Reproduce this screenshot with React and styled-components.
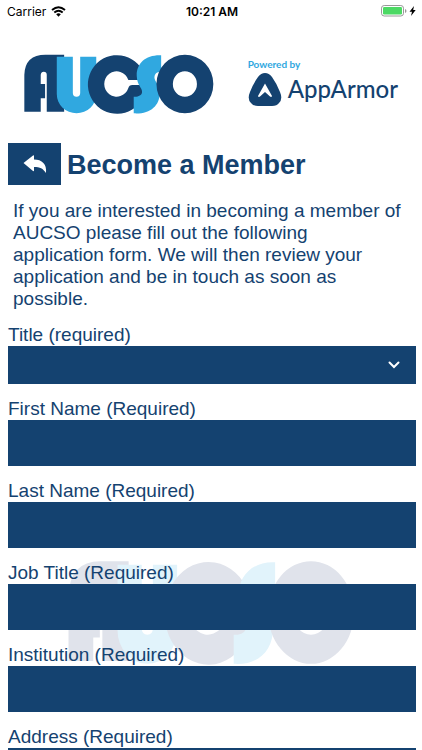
import styled, { createGlobalStyle } from "styled-components";

const fields = [
  { id: "firstName", label: "First Name (Required)" },
  { id: "lastName", label: "Last Name (Required)" },
  { id: "jobTitle", label: "Job Title (Required)" },
  { id: "institution", label: "Institution (Required)" },
  { id: "address", label: "Address (Required)" },
];

const AucsoLogo = ({ dark = "#144270", light = "#30a8e0", className }) => (
  <svg
    className={className}
    viewBox="72 160 568 180"
    preserveAspectRatio="none"
    role="img"
    aria-label="AUCSO"
  >
    <path
      fill={dark}
      d="M73 333V222Q75 162 136 162H192V333H140V222Q140 213 131 213Q122 213 122 224V250H135V293H122V333Z"
    />
    <path
      fill={light}
      d="M170 168H218V277Q218 288 229 288Q240 288 240 277V168H288V280A59 58 0 0 1 170 280Z"
    />
    {/* the C is a ring with a slot cut out to the right */}
    <path
      fill={dark}
      d="M436 238H384A37 38 0 1 0 384 262Q386 253 396 253H437A87 88 0 1 1 436 238Z"
    />
    <path
      fill={light}
      d="M482 164C436 162 408 188 409 226C410 254 426 262 425 274C424 285 413 289 400 288V338C448 341 478 316 478 276C478 250 461 243 462 229C463 218 470 213 482 213Z"
    />
    <path
      fill={dark}
      fillRule="evenodd"
      d="M468 250A85 88 0 1 1 638 250A85 88 0 1 1 468 250ZM517 250A36 38 0 1 0 589 250A36 38 0 1 0 517 250Z"
    />
  </svg>
);

const ArmorMark = () => (
  <svg width="34" height="34" viewBox="0 0 34 34" aria-hidden="true">
    <path
      fill="#144270"
      d="M10 5Q13 1 17 1Q21 1 24 5Q29 12 32 20Q35 27 31 31Q29 34 24 34H10Q5 34 3 31Q-1 27 2 20Q5 12 10 5Z"
    />
    <path fill="#fff" d="M17 11.500L24 24Q23.500 25.500 22 24.500L17 20L12 24.500Q10.500 25.500 10 24Z" />
  </svg>
);

const WifiIcon = () => (
  <svg width="15" height="11" viewBox="0 0 15 11" aria-hidden="true">
    <path d="M1 4Q7.500 -1.600 14 4M3.300 6.500Q7.500 2.800 11.700 6.500" fill="none" stroke="#000" strokeWidth="1.900" />
    <path d="M5.200 8.300Q7.500 6.400 9.800 8.300L7.500 10.700Z" />
  </svg>
);

const BatteryIcon = () => (
  <svg width="37" height="12" viewBox="0 0 37 12" aria-hidden="true">
    <rect x="1.500" y="0.500" width="22" height="10.500" rx="2.700" fill="#fff" stroke="#999" />
    <rect x="3" y="2" width="19" height="7.500" rx="1.200" fill="#4cd964" />
    <path d="M25 4Q26.500 4.500 26.500 6T25 8Z" fill="#999" />
    <path d="M34 1L29.500 6.700H32L31 11L35.700 5H33.200Z" />
  </svg>
);

const App = () => {
  return (
    <Page>
      <GlobalStyle />
      <Watermark dark="#e0e3eb" light="#e1f3fb" />
      <StatusBar>
        <Carrier>
          Carrier
          <WifiIcon />
        </Carrier>
        <Clock>10:21 AM</Clock>
        <Battery>
          <BatteryIcon />
        </Battery>
      </StatusBar>
      <Header>
        <HeaderLogo />
        <PoweredBy>
          <Small>Powered by</Small>
          <Brand>
            <ArmorMark />
            AppArmor
          </Brand>
        </PoweredBy>
      </Header>
      <Content>
        <TitleRow>
          <BackButton type="button" aria-label="Back">
            <svg width="24" height="19" viewBox="0 0 24 19" aria-hidden="true">
              <path
                fill="#fff"
                d="M0.500 8L10 0.500Q11 0 11 1V4.500C19 4.500 24 9 23 18C20 13.500 17 12 11 12V15.500Q11 16.500 10 16Z"
              />
            </svg>
          </BackButton>
          <Title>Become a Member</Title>
        </TitleRow>
        <Intro>
          If you are interested in becoming a member of AUCSO please fill out
          the following application form. We will then review your application
          and be in touch as soon as possible.
        </Intro>
        <Form>
          <Field>
            <Label htmlFor="title">Title (required)</Label>
            <SelectBox>
              <Select id="title" />
              <svg width="12" height="8" viewBox="0 0 12 8" aria-hidden="true">
                <path d="M1.500 1.500L6 6L10.500 1.500" fill="none" stroke="#fff" strokeWidth="2" strokeLinecap="round" />
              </svg>
            </SelectBox>
          </Field>
          {fields.map(({ id, label }) => (
            <Field key={id}>
              <Label htmlFor={id}>{label}</Label>
              <Input id={id} type="text" />
            </Field>
          ))}
        </Form>
      </Content>
    </Page>
  );
};

export default App;

//STYLES_________________________
const GlobalStyle = createGlobalStyle`
  * {
    box-sizing: border-box;
  }

  html, body, #root {
    height: 100%;
  }

  body {
    margin: 0;
    overflow: hidden;
    background-color: #fff;
  }
`;

const Page = styled.div`
  height: 100%;
  overflow: hidden;
  position: relative;
  z-index: 0;
  color: #144270;
  font-family: "Liberation Sans", Arial, sans-serif;
`;

const Watermark = styled(AucsoLogo)`
  position: absolute;
  z-index: -1;
  left: 16%;
  bottom: 85px;
  width: 68%;
  height: 105px;
`;

const StatusBar = styled.div`
  height: 22px;
  padding: 0 5px 0 7px;
  display: grid;
  grid-template-columns: 1fr auto 1fr;
  align-items: center;
  color: #000;
  font-family: Inter, sans-serif;
  font-size: 12px;
`;

const Carrier = styled.div`
  display: flex;
  align-items: center;
  gap: 5px;
`;

const Clock = styled.time`
  font-weight: 600;
`;

const Battery = styled.div`
  display: flex;
  justify-content: flex-end;
`;

const Header = styled.header`
  height: 121px;
  padding: 32px 24px 0;
  display: flex;
  justify-content: space-between;
`;

const HeaderLogo = styled(AucsoLogo)`
  width: 190px;
  height: 60px;
`;

const PoweredBy = styled.div`
  padding-top: 3px;
`;

const Small = styled.div`
  color: #30a8e0;
  font-family: Lato, sans-serif;
  font-size: 10px;
  font-weight: 700;
  line-height: 15px;
`;

const Brand = styled.div`
  display: flex;
  align-items: center;
  gap: 6px;
  font-family: Lato, sans-serif;
  font-size: 24px;
  font-weight: 500;
  line-height: 34px;
`;

const Content = styled.main`
  padding: 0 6px 0 8px;
`;

const TitleRow = styled.div`
  display: flex;
  align-items: center;
  gap: 6px;
`;

const BackButton = styled.button`
  width: 53px;
  height: 42px;
  padding: 0;
  border: 0;
  display: flex;
  justify-content: center;
  align-items: center;
  background-color: #144270;
`;

const Title = styled.h1`
  margin: 0;
  padding-top: 2px;
  font-size: 27px;
  font-weight: 700;
`;

const Intro = styled.p`
  margin: 15px 0 14px;
  padding: 0 14px 0 5px;
  font-size: 19px;
  line-height: 22px;
`;

const Form = styled.form`
  display: flex;
  flex-direction: column;
  gap: 14px;
`;

const Field = styled.div`
  display: flex;
  flex-direction: column;
`;

const Label = styled.label`
  font-size: 19px;
  line-height: 22px;
`;

const Input = styled.input`
  width: 100%;
  height: 46px;
  padding: 0 12px;
  border: 0;
  border-radius: 0;
  background-color: #144270;
  color: #fff;
  font-size: 19px;
`;

const SelectBox = styled.div`
  display: grid;
  align-items: center;

  > * {
    grid-area: 1 / 1;
  }

  svg {
    justify-self: end;
    margin-right: 16px;
    pointer-events: none;
  }
`;

const Select = styled.select`
  width: 100%;
  height: 38px;
  padding: 0 12px;
  border: 0;
  border-radius: 0;
  appearance: none;
  background-color: #144270;
  color: #fff;
  font-size: 19px;
`;
